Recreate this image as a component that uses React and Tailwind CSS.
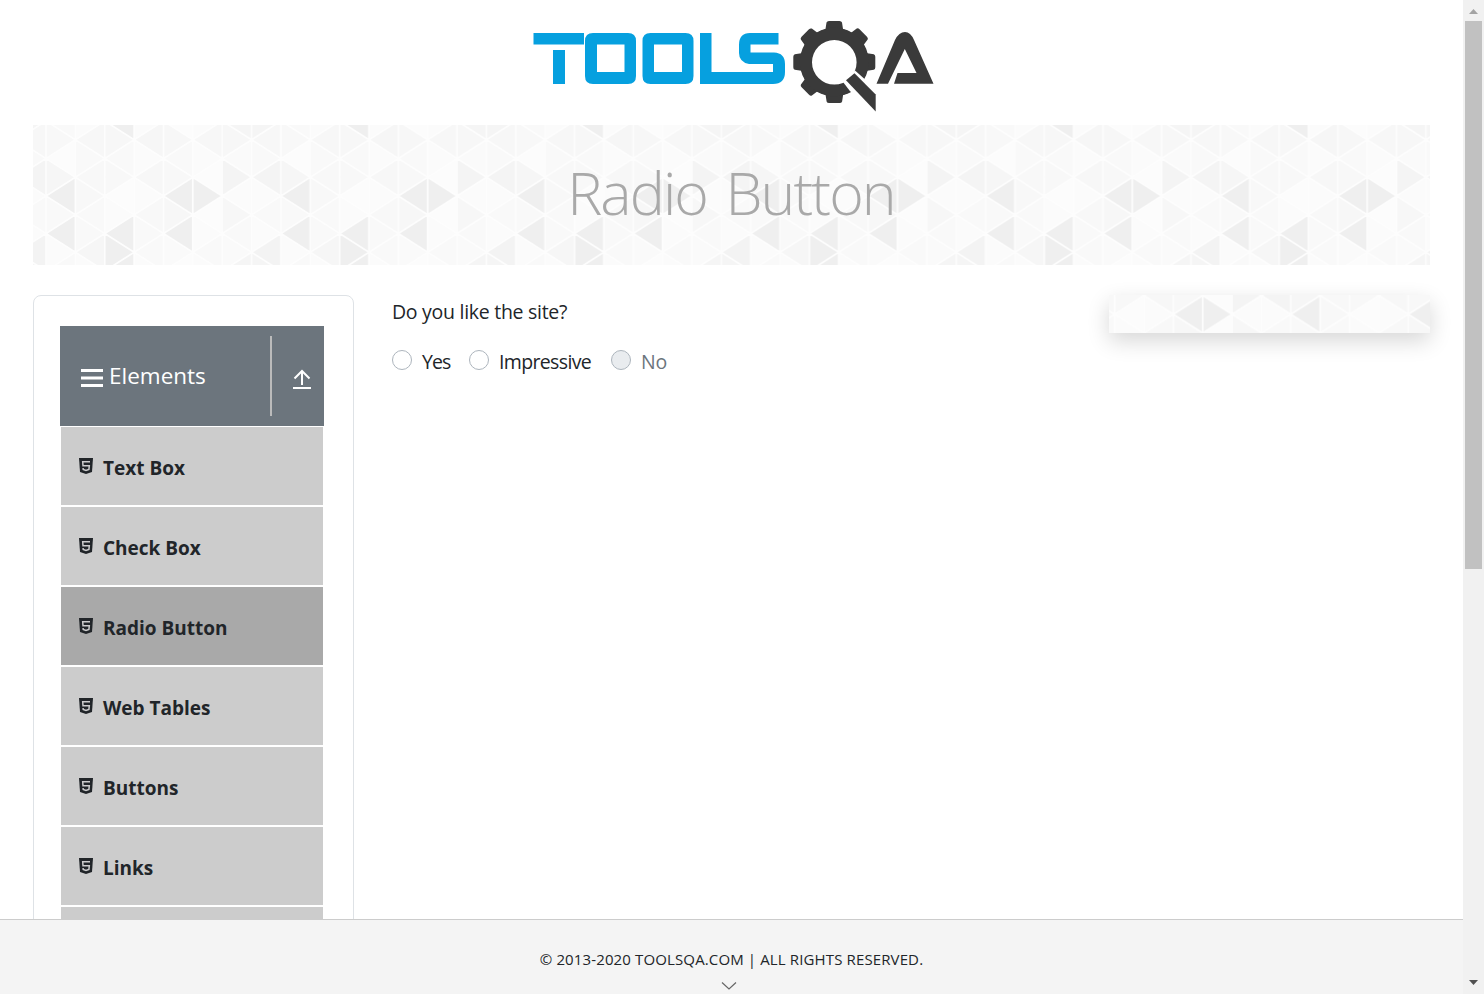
import React from "react";

const COLS = 8;
const CW = 29.36;
const RH = 18.75;
// Shades per strip, top to bottom; one triangle per half-row.
const SHADES = [
  ["f9", "f8", "fc", "f6", "ef", "f9", "ef", "fb"],
  ["fb", "f7", "f9", "f8", "f8", "f9", "f9", "f6"],
  ["ef", "f7", "f9", "f8", "fc", "fb", "ef", "ef"],
  ["fb", "f6", "fb", "f7", "fb", "f8", "f9", "f9"],
  ["fc", "f7", "f9", "f8", "ef", "f7", "ef", "fa"],
  ["fb", "f7", "fb", "fc", "ef", "fc", "fb", "f9"],
  ["f5", "f7", "fa", "f4", "fb", "f7", "f9", "fa"],
  ["f5", "f7", "f9", "f4", "fb", "f9", "fb", "f3"],
];

function Triangles({ id, x, y }) {
  const fills = [];
  let grid = "";
  for (let c = 0; c <= COLS; c++) {
    grid += `M${c * CW} 0V${8 * RH}`;
  }
  for (let c = 0; c < COLS; c++) {
    for (let r = 0; r <= 8; r++) {
      const ay = r * RH;
      const left = (c + r) % 2 === 0;
      const ax = left ? c * CW : (c + 1) * CW;
      const bx = left ? (c + 1) * CW : c * CW;
      grid += `M${bx} ${ay - RH}L${ax} ${ay}L${bx} ${ay + RH}`;
      fills.push(
        <path key={`${c}-${r}`} d={`M${ax} ${ay}L${bx} ${ay - RH}V${ay + RH}Z`} fill={`#${SHADES[c][r % 8].repeat(3)}`} />
      );
    }
  }
  return (
    <svg className="block h-full w-full" aria-hidden="true">
      <defs>
        <pattern id={id} x={x} y={y} width={COLS * CW} height={8 * RH} patternUnits="userSpaceOnUse">
          {fills}
          <path d={grid} fill="none" stroke="#fdfdfd" strokeWidth="1.7" />
        </pattern>
      </defs>
      <rect width="100%" height="100%" fill={`url(#${id})`} />
    </svg>
  );
}

function Logo() {
  const teeth = [0, 45, 90, 135, 180, 225, 270, 315];
  return (
    <svg className="h-[100px] w-[410px]" viewBox="528 16 410 100" aria-label="ToolsQA">
      <g fill="#06a0df">
        <path d="M533.5 33H584V44.5H533.5ZM553 50H565V84H553Z" />
        <path fillRule="evenodd" d="M593 33H628Q636 33 636 41V76Q636 84 628 84H593Q585 84 585 76V41Q585 33 593 33ZM597 44.5V72H624.5V44.5Z" />
        <path fillRule="evenodd" d="M650.5 33H685.5Q693.5 33 693.5 41V76Q693.5 84 685.5 84H650.5Q642.5 84 642.5 76V41Q642.5 33 650.5 33ZM654 44.5V72H682V44.5Z" />
        <path d="M700 33H711.5V72H773V64H749Q739 62 739 53V45Q739 33 750 33H778.5V44.5H750.5V52.5H774Q785 53 785 64V72Q785 84 773 84H700Z" />
      </g>
      <g fill="#3a3a3a">
        {teeth.map((a) => (
          <path key={a} transform={`rotate(${a} 834.3 62)`} d="M821 31L825.5 29L826.5 22.5Q827 21 829 21H839.5Q841.5 21 842 22.5L843 29L847.5 31Z" />
        ))}
        <path fillRule="evenodd" d="M834.3 27.5A34.5 34.5 0 1 1 834.3 96.5A34.5 34.5 0 1 1 834.3 27.5ZM834.3 40A22.3 22.3 0 1 0 834.3 84.6A22.3 22.3 0 1 0 834.3 40Z" />
        <path d="M843 82L855 70.5L864 78.5L884 97V118L870 112L849.5 90.5Z" fill="#fff" />
        <path d="M846 80.2L854.5 73.3L875.7 94.5V111.5Z" />
        <path d="M876.5 83.7L895 40Q899 32 905 32Q910.5 32 914 40L933.5 83.7H894L897.5 73H916.5L904.8 49L888 83.7Z" />
      </g>
    </svg>
  );
}

function Html5Icon() {
  return (
    <svg className="mt-[11px] h-4 w-[14px] shrink-0" viewBox="0 0 14 16" fill="none" aria-hidden="true">
      <path d="M0 0H14L13 14L7 16L1 14Z" fill="#212529" />
      <path d="M11 3.7H3.7L4 7.8H10.3L9.9 11.5L7 12.4L4.2 11.5L4.1 10" stroke="#ccc" strokeWidth="1.5" />
    </svg>
  );
}

const MENU = ["Text Box", "Check Box", "Radio Button", "Web Tables", "Buttons", "Links", ""];

function Radio({ label, disabled, className, textClass }) {
  return (
    <label className={`flex items-center ${disabled ? "text-[#6c757d]" : ""} ${className}`}>
      <span className={`mb-1 mr-[10px] h-5 w-5 shrink-0 rounded-full border border-[#adb5bd] ${disabled ? "bg-[#e9ecef]" : "bg-white"}`} />
      <span className={`whitespace-nowrap ${textClass}`}>{label}</span>
    </label>
  );
}

export default function App() {
  return (
    <div className="flex h-[994px] w-[1484px] overflow-hidden bg-white font-['Open_Sans','Noto_Sans',sans-serif] text-[#212529]">
      <div className="flex w-[1463px] flex-col">
        <main className="flex h-[919px] flex-col overflow-hidden pl-[33px] pr-[33px]">
          <header className="flex h-[125px] shrink-0 pl-[495px] pt-4">
            <Logo />
          </header>
          <div className="relative h-[140px] w-[1397px] shrink-0">
            <Triangles id="hero" x={13} y={-4} />
            <h1 className="absolute inset-0 flex items-center justify-center text-[59px] font-light leading-none text-[#a9a9a9]">
              <span className="whitespace-nowrap pb-[5px] pr-px tracking-[-1.9px] [word-spacing:5px]">Radio Button</span>
            </h1>
          </div>
          <div className="mt-[30px] flex min-h-0 flex-1">
            <aside className="h-[900px] w-[321px] shrink-0 rounded-lg border border-[#dee2e6] pl-[26px] pt-[30px]">
              <div className="flex h-[100px] w-[264px] items-center bg-[#6c757d] text-white">
                <svg className="ml-[21px] mt-1 h-[20px] w-[22px]" viewBox="0 0 22 20" aria-hidden="true">
                  <path d="M.5 2.5H21.5M.5 10H21.5M.5 17.5H21.5" stroke="#fff" strokeWidth="3.2" strokeLinecap="round" />
                </svg>
                <span className="ml-[6px] w-[161px] whitespace-nowrap text-[22.5px]">Elements</span>
                <span className="h-20 w-[2px] bg-[#bbb]" />
                <svg className="ml-[21px] mt-[6px] h-5 w-[18px]" viewBox="0 0 18 20" fill="none" stroke="#fff" strokeWidth="2" aria-hidden="true">
                  <path d="M9 16V2M1.500 9.500L9 2L16.500 9.500M0 19H18" />
                </svg>
              </div>
              <ul className="ml-px flex w-[262px] flex-col pt-px">
                {MENU.map((m, i) => (
                  <li key={m} className={`mb-[2px] flex h-[78px] shrink-0 pl-[18px] pt-[20px] ${i === 2 ? "bg-[#a9a9a9]" : "bg-[#ccc]"}`}>
                    {m && <Html5Icon />}
                    <span className="ml-[10px] whitespace-nowrap pt-[7px] text-[19px] font-bold leading-[28px]">{m}</span>
                  </li>
                ))}
              </ul>
            </aside>
            <section className="ml-[38px] w-[717px] shrink-0 pt-[2px] text-[19.5px]">
              <p className="leading-[30px] tracking-[-0.28px]">Do you like the site?</p>
              <div className="mt-5 flex leading-[30px]">
                <Radio label="Yes" className="w-[77px]" textClass="tracking-[-0.9px]" />
                <Radio label="Impressive" className="w-[142px]" textClass="tracking-[-0.65px]" />
                <Radio label="No" disabled className="" textClass="tracking-[-0.2px]" />
              </div>
            </section>
            <div className="h-[38px] w-[321px] shrink-0 bg-white shadow-[0_8px_22px_rgba(0,0,0,0.16)]">
              <Triangles id="side" x={-53.1} y={-55.7} />
            </div>
          </div>
        </main>
        <footer className="flex h-[75px] flex-col items-center border-t border-[#ccc] bg-[#f4f4f4] pt-[27px]">
          <p className="whitespace-nowrap text-[15px] leading-6 tracking-[0.13px]">© 2013-2020 TOOLSQA.COM | ALL RIGHTS RESERVED.</p>
          <svg className="mr-[5px] mt-[11px] h-2 w-4" viewBox="0 0 16 8" fill="none" stroke="#666" aria-hidden="true">
            <path d="M1 .5L8 7L15 .5" strokeWidth="1.2" />
          </svg>
        </footer>
      </div>
      <div className="flex w-[21px] flex-col items-center justify-between bg-[#f1f1f1]">
        <svg className="h-[21px] w-[21px] shrink-0" viewBox="0 0 21 21" aria-hidden="true">
          <path d="M6 14H15L10.5 9Z" fill="#a3a3a3" />
        </svg>
        <div className="h-[548px] w-[17px] shrink-0 bg-[#c1c1c1]" />
        <div className="flex-1" />
        <svg className="h-[21px] w-[21px] shrink-0" viewBox="0 0 21 21" aria-hidden="true">
          <path d="M6 7H15L10.5 12Z" fill="#505050" />
        </svg>
      </div>
    </div>
  );
}
